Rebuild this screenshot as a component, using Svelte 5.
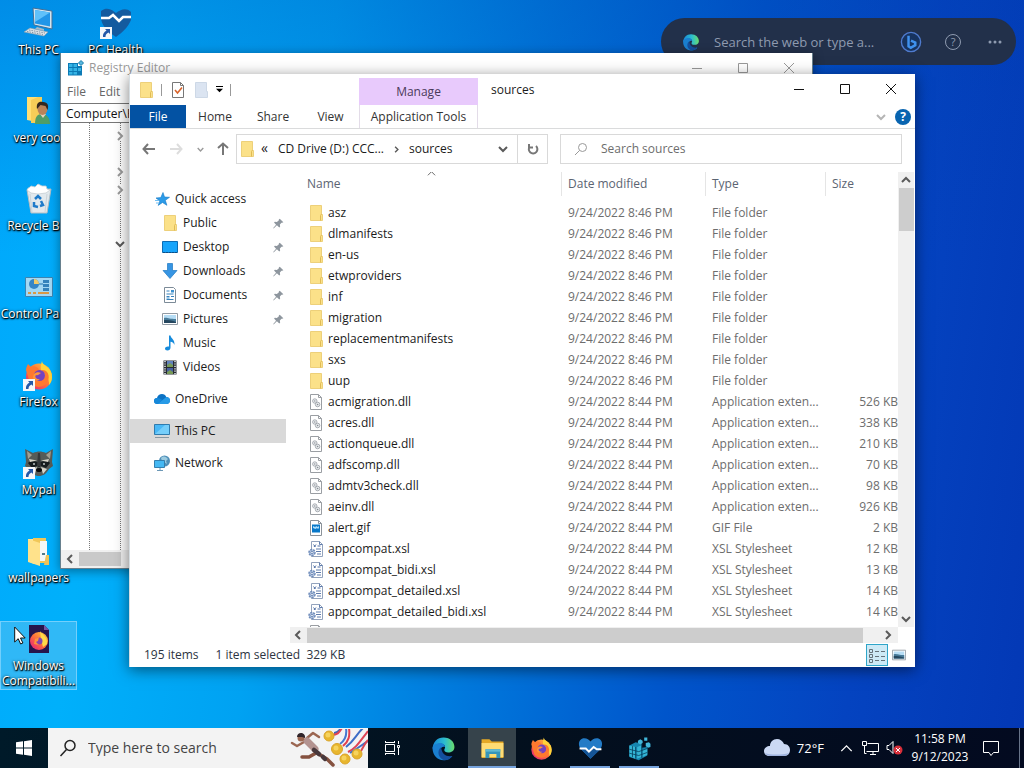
<script>
  const shortcuts = [
    { label: 'This PC', icon: 'computer' },
    { label: 'very cool', icon: 'user' },
    { label: 'Recycle Bin', icon: 'bin' },
    { label: 'Control Panel', icon: 'control' },
    { label: 'Firefox', icon: 'firefox', link: true },
    { label: 'Mypal', icon: 'mypal', link: true },
    { label: 'wallpapers', icon: 'wallpapers' },
    { label: 'Windows Compatibili...', icon: 'compat', selected: true },
    { label: 'PC Health', icon: 'health', link: true }
  ];

  const places = [
    { label: 'Quick access', icon: 'star' },
    { label: 'Public', icon: 'folder', child: true, pinned: true },
    { label: 'Desktop', icon: 'desktop', child: true, pinned: true },
    { label: 'Downloads', icon: 'download', child: true, pinned: true },
    { label: 'Documents', icon: 'document', child: true, pinned: true },
    { label: 'Pictures', icon: 'picture', child: true, pinned: true },
    { label: 'Music', icon: 'music', child: true },
    { label: 'Videos', icon: 'video', child: true },
    { label: 'OneDrive', icon: 'cloud', top: true },
    { label: 'This PC', icon: 'monitor', top: true, selected: true },
    { label: 'Network', icon: 'network', top: true }
  ];

  const folders = ['asz', 'dlmanifests', 'en-us', 'etwproviders', 'inf', 'migration', 'replacementmanifests', 'sxs', 'uup'];

  const files = [
    ...folders.map((name) => ({ name, icon: 'folder', date: '9/24/2022 8:46 PM', type: 'File folder', size: '' })),
    ...[
      ['acmigration.dll', 'dll', 'Application exten...', '526 KB'],
      ['acres.dll', 'dll', 'Application exten...', '338 KB'],
      ['actionqueue.dll', 'dll', 'Application exten...', '210 KB'],
      ['adfscomp.dll', 'dll', 'Application exten...', '70 KB'],
      ['admtv3check.dll', 'dll', 'Application exten...', '98 KB'],
      ['aeinv.dll', 'dll', 'Application exten...', '926 KB'],
      ['alert.gif', 'gif', 'GIF File', '2 KB'],
      ['appcompat.xsl', 'xsl', 'XSL Stylesheet', '12 KB'],
      ['appcompat_bidi.xsl', 'xsl', 'XSL Stylesheet', '13 KB'],
      ['appcompat_detailed.xsl', 'xsl', 'XSL Stylesheet', '14 KB'],
      ['appcompat_detailed_bidi.xsl', 'xsl', 'XSL Stylesheet', '14 KB']
    ].map(([name, icon, type, size]) => ({ name, icon, type, size, date: '9/24/2022 8:44 PM' })),
    { name: '', icon: 'dll', date: '', type: '', size: '' }
  ];

  const apps = [
    { label: 'Microsoft Edge', icon: 'edge' },
    { label: 'File Explorer', icon: 'explorer', active: true },
    { label: 'Firefox', icon: 'firefox' },
    { label: 'PC Health Check', icon: 'heart', open: true },
    { label: 'Registry Editor', icon: 'regcube', open: true }
  ];

  // drawn on a 32px grid, everything else uses 16px
  const large = ['computer', 'user', 'bin', 'control', 'firefox', 'mypal', 'wallpapers', 'compat', 'health', 'edge', 'explorer', 'heart', 'regcube'];
</script>

{#snippet icon(name, size = 16)}
  <svg class="icon" width={size} height={size} viewBox={large.includes(name) ? '0 0 32 32' : '0 0 16 16'} aria-hidden="true">
    {#if name === 'folder'}
      <path d="M2.500 0.500h11v9h1v6h-12z" fill="#fbe189" stroke="#edd07a" />
      <path d="M12.500 15.500v-5l1-1.500" fill="none" stroke="#e0bb55" />
    {:else if name === 'ghostfolder'}
      <path d="M2.500 0.500h11v9h1v6h-12z" fill="#dbe4f1" stroke="#cdd8e6" />
    {:else if name === 'check'}
      <path d="M2.500 0.500h8l3 3v12h-11z" fill="#fff" stroke="#777" />
      <path d="M10.500 0.500v3h3" fill="none" stroke="#777" />
      <path d="M5 8l2.500 3L12 5.500" fill="none" stroke="#d9642b" stroke-width="1.600" />
    {:else if name === 'dll'}
      <path d="M2.500 0.500h8l3 3v12h-11z" fill="#fff" stroke="#9a9ea3" />
      <path d="M10.500 0.500v3h3" fill="none" stroke="#9a9ea3" />
      <circle cx="6.800" cy="7" r="2.200" fill="#eceef0" stroke="#989da4" stroke-width=".8" />
      <circle cx="6.800" cy="7" r=".7" fill="#858b93" />
      <circle cx="9.600" cy="10.500" r="2.300" fill="#e6e9eb" stroke="#989da4" stroke-width=".8" />
      <circle cx="9.600" cy="10.500" r=".8" fill="#858b93" />
    {:else if name === 'gif'}
      <path d="M2.500 0.500h8l3 3v12h-11z" fill="#fff" stroke="#8b9299" />
      <path d="M10.500 0.500v3h3" fill="none" stroke="#8b9299" />
      <path d="M4 4.500h8v8H4z" fill="#0878c9" />
      <path d="M5 6l2 1 1.500-1 1 1L11 6v2l-1 1-1-1-1.500 1L5 8z" fill="#a9dcfb" />
    {:else if name === 'xsl'}
      <path d="M3.500 0.500h8l3 3v12h-11z" fill="#fff" stroke="#93a3bd" />
      <path d="M11.500 0.500v3h3M8 8h5M8 10.500h5M9 13h4" fill="none" stroke="#5f7cad" />
      <path d="M5.500 3.500l2 2.500M8 3.500L6 6M9.500 5h3" stroke="#4f6fa5" fill="none" />
      <circle cx="4" cy="11.500" r="3" fill="#b9c9e3" stroke="#6f8cba" stroke-width="1.500" stroke-dasharray="2 1" />
      <circle cx="4" cy="11.500" r="1.200" fill="#fff" stroke="#6f8cba" />
    {:else if name === 'star'}
      <path d="M9 1.500l1.500 4.500 5 .3-4.200 3 1.600 5L8.500 11.500l-4.300 2.900 1.700-4.400L2 7l4.800-.4z" fill="#2b9be8" stroke="#1479c6" stroke-width=".6" />
      <path d="M1 9.500h4M2 12h3" stroke="#72bff2" />
    {:else if name === 'desktop'}
      <path d="M.5 2.500h15v11H.5z" fill="#18a5fb" stroke="#0d6db5" />
      <path d="M1 13.500h14" stroke="#0b4f86" stroke-dasharray="2 1" />
    {:else if name === 'download'}
      <path d="M5.500 0.500h5v7h4.500L8 15.500 1 7.500h4.500z" fill="#3795e3" stroke="#1e78c2" stroke-width=".7" />
    {:else if name === 'document'}
      <path d="M2.500 0.500h9l2 2v13h-11z" fill="#fff" stroke="#7c8b98" />
      <path d="M4.500 4h3M4.500 7h7M4.500 9.500h3M9 9.500h3M4.500 12.500h7" stroke="#3682bc" />
      <path d="M9 3h3v2.500H9zM4.500 10.500h3v1h-3z" fill="#3d91cf" />
    {:else if name === 'picture'}
      <path d="M.5 2.500h15v11H.5z" fill="#fff" stroke="#929ba4" />
      <path d="M2 4h12v8H2z" fill="#b6ddf5" />
      <path d="M2 7c3-1 5 1 12 1v4H2z" fill="#477a98" />
      <path d="M2 9c4 0 7 0 12 2v1H2z" fill="#25475f" />
    {:else if name === 'music'}
      <path d="M7 0.500h1.500c.3 3 4.500 4 4 9.500-.6-2-2-3-4-3.200v5.700c0 2-1.300 3-3 3s-2.500-.8-2.500-2 1.500-2.500 4-2z" fill="#168bdc" />
    {:else if name === 'video'}
      <path d="M1.500 1.500h13v14h-13z" fill="#272b32" />
      <path d="M5 2h6v6H5z" fill="#6182be" /><path d="M5 9h6v6H5z" fill="#465fa0" />
      <path d="M5 6l3-2 3 2v2H5zM5 13l3-2 3 2v2H5z" fill="#789b57" />
      <path d="M3 2v14M13 2v14" stroke="#e5e9ef" stroke-width="1.500" stroke-dasharray="1.200 1.200" />
    {:else if name === 'cloud'}
      <path d="M3.500 13C1.300 13 0 11.700 0 10s1.300-3 3-3C3.700 4.500 5.500 3 8 3c2 0 3.600 1 4.300 3 2.200 0 3.700 1.500 3.700 3.500S14.600 13 12.500 13z" fill="#0c72c4" />
      <path d="M3.500 13l8.800-7c2.200 0 3.700 1.500 3.700 3.500S14.600 13 12.500 13z" fill="#279be7" />
      <path d="M3 7c2-.3 4 .7 5.200 2.200L3.500 13C1.300 13 0 11.700 0 10s1.300-3 3-3z" fill="#1688da" />
    {:else if name === 'monitor'}
      <path d="M.5 1.500h15v10H.5z" fill="#49b8f6" stroke="#307bad" />
      <path d="M1 11L11 2h4v9z" fill="#75cefa" />
      <path d="M1 14.500h14" stroke="#8798a3" />
    {:else if name === 'network'}
      <circle cx="10.500" cy="6" r="5.500" fill="#4f8fb8" />
      <path d="M7 3c3-3 5-1 7 1l-2 2 1 3-3-2-2-1z" fill="#9ccbe0" />
      <path d="M.5 5.500h10v7H.5z" fill="#45b8f3" stroke="#347fae" />
      <path d="M3 15.500h6M6 13v2" stroke="#6c98b6" />
    {:else if name === 'pin'}
      <path d="M9.500 2L14 6.500l-1.500.7-.8-.2-2 2.300.3 2.700-1 1-3-3L2 14l-.5-.5L5 9.500l-2.500-2.600 1-1 2.500.2L8.500 4l-.1-1z" fill="#8e969e" />
    {:else if name === 'registry'}
      <path d="M0 3h10v3h4v9.500H0z" fill="#0c7ab5" />
      <path d="M1 4h3.500v3H1zM5.500 4H9v3H5.500zM1 8h3.500v3H1zM5.500 8H9v3H5.500zM10 8h3v3h-3zM1 12h3.500v2.500H1zM5.500 12H9v2.500H5.500z" fill="#35b4e6" />
      <path d="M13 0.500l2.500 2.500L13 5.500 10.500 3z" fill="#55b6e0" stroke="#187ca8" />
    {:else if name === 'bing'}
      <circle cx="8" cy="8" r="7" fill="#17335f" stroke="#4f7bcf" />
      <path d="M6.200 3.500v7.700l1.600 1 3.300-1.900V8.400L8 7" fill="none" stroke="#3f91ee" stroke-width="1.800" />
    {:else if name === 'computer'}
      <path d="M10 1l19 3v18l-18-4z" fill="#d3e4ef" stroke="#426f97" />
      <path d="M12 3l15 2.500v14L12 16.500z" fill="#2196e8" /><path d="M12 3l15 2.500L12 15z" fill="#5fc1fa" />
      <path d="M14 20l7 2v2l-9-2z" fill="#a8bac8" />
      <path d="M7 21l18 4-4 4-20-4z" fill="#dce3e8" stroke="#899ca9" stroke-width=".6" />
      <path d="M6 23l16 3M4 24.500l16 3" stroke="#8697a6" stroke-dasharray="1.500 1" />
    {:else if name === 'user'}
      <path d="M4 2h15v26l-15-3z" fill="#ffdf75" /><path d="M8 5l7-3h4v26H8z" fill="#f6cd58" />
      <path d="M12 29c0-8 3-10 7-10s8 3 8 10z" fill="#4f9d67" /><path d="M17 19l3 4 3-4z" fill="#e6d4bc" />
      <ellipse cx="19.500" cy="14" rx="5" ry="6" fill="#b98359" />
      <path d="M14 14c-1-6 2-8 6-7 5 0 6 4 4.500 8l-2-4-5-1z" fill="#33271f" />
    {:else if name === 'bin'}
      <path d="M4 7l24-1-4 24H8z" fill="#e2e9ed" stroke="#b3bdc3" />
      <path d="M4 7c1-3 3-2 4-4l4 1 3-3 4 2 4 0 1 3 3 1-4 3-8 1-7-1z" fill="#fff" stroke="#c6ced3" stroke-width=".8" />
      <path d="M12 16l3-3 3 3M18 18l2 4-3 1M15 24l-4-1v-4" fill="none" stroke="#207bc9" stroke-width="2.500" />
      <path d="M24 11l-2 18M7 11l2 18" stroke="#cbd3d8" />
    {:else if name === 'control'}
      <path d="M2.500 6.500h27v19h-27z" fill="#a3d8f4" stroke="#3c84b1" />
      <circle cx="11" cy="13" r="5" fill="#3685c5" /><path d="M11 13V8a5 5 0 0 1 5 5z" fill="#f2ca67" />
      <path d="M20 9h6v3h-6zM20 13h6v3h-6zM20 17h6v3h-6z" fill="#3483bc" />
      <path d="M5 22h3M10 22h3M15 22h11" stroke="#d99845" stroke-width="2" /><path d="M16 13h4" stroke="#2575ad" />
    {:else if name === 'firefox'}
      <circle cx="16" cy="17.500" r="13" fill="url(#fox)" />
      <path d="M19 2c0 5 10 6 10 16 0 3-1 6-3 8 1-8-5-9-7-12-2-4-1-9 0-12z" fill="#ffd43b" />
      <path d="M3 11c0-2 1-4 2-6l3 3c2-1 4-1 5 0 3 1 4 4 2 6-4 0-4 4-1 6s8 0 8-3-2-5-4-6c7-1 9 6 7 11-4 8-14 7-18 2z" fill="#ff792f" />
      <circle cx="16.500" cy="16.500" r="5.500" fill="#7542bf" />
      <path d="M11 15c2-2 5-2 7-1-2 1-3 3-5 2-2 2 1 5 4 4-3 3-7 1-7-2z" fill="#ff9838" />
    {:else if name === 'mypal'}
      <path d="M2 2l8 4c5-2 8-2 13 0l7-4-1 13 1 4-4 3c-3 5-6 7-10 7S8 27 6 22l-4-3 1-4z" fill="#565c58" />
      <path d="M4 4l5 4-4 4zM28 4l-5 4 4 4z" fill="#a4a091" />
      <path d="M5 16c4-4 8-1 11-1s8-3 11 1l-4 5-5-2-2 1-2-1-5 2z" fill="#161d1e" />
      <path d="M6 12l8 1.500L7 15zM26 12l-8 1.500 7 1.500zM8 22l6-2-2 7zM24 22l-6-2 2 7z" fill="#d7d5c9" />
      <circle cx="11" cy="17" r="1" fill="#bec6c5" /><circle cx="21" cy="17" r="1" fill="#bec6c5" />
      <path d="M15 6h2l1 13h-4z" fill="#35393a" /><ellipse cx="16" cy="23" rx="3" ry="2" fill="#080a0b" />
    {:else if name === 'wallpapers'}
      <path d="M5 4h6v25l-6-3z" fill="#ffe69a" /><path d="M10 3h13v25H10z" fill="#f1c758" />
      <path d="M17 6h7v20h-7z" fill="#f5f7f7" /><path d="M19 18h3v2h-3z" fill="#537b8b" />
      <path d="M5 4l12 4v23L5 27z" fill="#ffe28b" /><path d="M23 20h3v10h-5z" fill="#eec35b" />
    {:else if name === 'compat'}
      <path d="M6 2h15l5 5v23H6z" fill="#26154c" /><path d="M21 2v5h5z" fill="#7355a3" />
      <circle cx="16" cy="18" r="9" fill="url(#fox)" /><path d="M17 8c1 3 8 5 7 13l-4 3-2-8z" fill="#ffda48" />
      <circle cx="16" cy="18" r="3.500" fill="#8445af" /><path d="M12 16l4-2-1 4-2 1 3 3-5-1z" fill="#ff923b" />
    {:else if name === 'health'}
      <path d="M1 4c7-5 12 0 15 2 4-3 10-6 15-1v8c-3 7-8 12-15 17C7 24 1 18 1 10z" fill="#145b9f" />
      <path d="M1 11h8l4-3 6 6 4-4h8" fill="none" stroke="#fff" stroke-width="2.500" />
    {:else if name === 'edge'}
      <path d="M2 17C2 8 8 2 16 2c9 0 14 6 14 12 0 5-4 7-8 7-3 0-5-1-5-3 0-1 1-2 1-4 0-2-2-4-5-4-5 0-10 4-11 7z" fill="url(#edge)" />
      <path d="M2 16c0-4 5-7 10-7 4 0 6 3 6 5-3-1-6 1-6 5 0 5 5 8 9 8 3 0 5-1 6-1-2 3-6 5-11 5C8 31 2 24 2 16z" fill="#1a7fd0" />
      <path d="M13 14.500c-6 4-4 14 4 16.500 5 0 8-2 10.500-5.500-7 2-14-2-14.500-11z" fill="#144f9e" />
    {:else if name === 'explorer'}
      <path d="M2 4h10l3 3h15v21H2z" fill="#e5a926" /><path d="M2 9h28v18H2z" fill="#ffdc73" />
      <path d="M7 17h19v11h-5v-5h-9v5H7z" fill="#3695ba" /><path d="M7 17h19v3H7z" fill="#63bad2" />
    {:else if name === 'heart'}
      <path d="M16 29L3 16C-1 10 2 3 8 3c4 0 6 2 8 4 2-2 4-4 8-4 6 0 9 7 5 13z" fill="#237bc6" />
      <path d="M16 29L3 16h8l3 4 6-6 3 3h6z" fill="#155597" />
      <path d="M2 16h8l4 4 6-6 4 3h6" fill="none" stroke="#fff" stroke-width="2.500" />
    {:else if name === 'regcube'}
      <path d="M3 12l8-4 8 2v5l7-1v11l-11 6-12-4z" fill="#1685ae" />
      <path d="M3 12l8 2v15l-8-3zM13 14l5-2v15l-5 2zM20 18l6-2v8l-6 3z" fill="#34b4d4" />
      <path d="M7 13v14M3 17l12 3 11-4M3 22l12 3 11-4M11 14v15M19 10v18" stroke="#073d5b" fill="none" />
      <path d="M14 6l3-2 3 2v3l-3 2-3-2zM24 9l4-1 2 2v4l-3 1-3-2zM22 2h4v4h-4z" fill="#42b7da" />
    {/if}
  </svg>
{/snippet}

{#snippet chevron(dir, size = 10)}
  <svg class="chevron {dir}" width={size} height={size} viewBox="0 0 10 10" aria-hidden="true"><path d="M1 3l4 4 4-4" /></svg>
{/snippet}

{#snippet windowButtons()}
  <div class="window-buttons">
    <button aria-label="Minimize"><svg width="10" height="10"><path d="M0 5.500h10" /></svg></button>
    <button aria-label="Maximize"><svg width="10" height="10"><path d="M.5 .5h9v9h-9z" /></svg></button>
    <button aria-label="Close"><svg width="10" height="10"><path d="M0 0l10 10M10 0L0 10" /></svg></button>
  </div>
{/snippet}

<svg class="defs" width="0" height="0" aria-hidden="true">
  <defs>
    <linearGradient id="fox" x1="1" y1="0" x2="0" y2="1"><stop offset="0" stop-color="#ffd83d" /><stop offset=".5" stop-color="#ff7139" /><stop offset="1" stop-color="#e31587" /></linearGradient>
    <linearGradient id="edge"><stop offset="0" stop-color="#1686d9" /><stop offset=".55" stop-color="#2cbdcf" /><stop offset="1" stop-color="#69dd6c" /></linearGradient>
  </defs>
</svg>

<div class="screen">
  <main class="desktop">
    <nav class="shortcuts" aria-label="Desktop">
      {#each shortcuts as item}
        <button class="shortcut" class:selected={item.selected}>
          <span class="shortcut-icon">
            {@render icon(item.icon, 32)}
            {#if item.link}
              <svg class="arrow" width="12" height="12" viewBox="0 0 12 12"><path d="M0 0h12v12H0z" fill="#f5f7fa" /><path d="M5 2h5v5L8.500 5.500C6 7 5.500 8 5.500 10H3C2.500 7 4 5 6.500 3.500z" fill="#2458a8" /></svg>
            {/if}
          </span>
          <span>{item.label}</span>
        </button>
      {/each}
    </nav>

    <form class="edge-bar">
      {@render icon('edge', 18)}
      <input aria-label="Search the web" placeholder="Search the web or type a..." />
      <button type="button" aria-label="Bing chat">{@render icon('bing', 22)}</button>
      <button type="button" aria-label="Help"><span class="ring">?</span></button>
      <button type="button" aria-label="More"><svg class="dots" width="16" height="4"><circle cx="3" cy="2" r="1.500" /><circle cx="8" cy="2" r="1.500" /><circle cx="13" cy="2" r="1.500" /></svg></button>
    </form>

    <section class="window registry">
      <header class="reg-title">{@render icon('registry')}<span>Registry Editor</span>{@render windowButtons()}</header>
      <div class="reg-menu"><button>File</button><button>Edit</button></div>
      <input class="reg-path" aria-label="Key path" value="Computer\HKEY_LOCAL_MACHINE" />
      <div class="reg-tree">
        <div class="reg-line"></div>
        <div class="reg-nodes">
          {@render chevron('right')}
          {@render chevron('right')}
          {@render chevron('right')}
          {@render chevron('down')}
        </div>
      </div>
      <div class="reg-scroll">{@render chevron('left')}<span></span></div>
    </section>

    <section class="window explorer">
      <header class="title">
        <div class="quick">
          {@render icon('folder')}<i></i>{@render icon('check')}{@render icon('ghostfolder')}
          <svg width="7" height="7" viewBox="0 0 8 8"><path d="M0 0h8v1H0zM0 3h8L4 7z" /></svg><i></i>
        </div>
        <span class="manage">Manage</span>
        <span class="caption">sources</span>
        {@render windowButtons()}
      </header>

      <div class="ribbon">
        <button class="file">File</button>
        <button class="home">Home</button>
        <button class="share">Share</button>
        <button class="view">View</button>
        <button class="tools">Application Tools</button>
        <span class="ribbon-end">{@render chevron('down light')}<button class="help" aria-label="Help">?</button></span>
      </div>

      <div class="toolbar">
        <div class="history">
          <button aria-label="Back"><svg width="14" height="12" viewBox="0 0 14 12"><path d="M6 1L1.500 6 6 11M1.500 6H13" /></svg></button>
          <button class="off" aria-label="Forward"><svg width="14" height="12" viewBox="0 0 14 12"><path d="M8 1l4.500 5L8 11M12.500 6H1" /></svg></button>
          <button class="recent" aria-label="Recent">{@render chevron('down', 7)}</button>
          <button aria-label="Up"><svg width="12" height="14" viewBox="0 0 12 14"><path d="M1 6l5-4.500L11 6M6 1.500V13" /></svg></button>
        </div>
        <div class="address">
          {@render icon('folder')}
          <span class="back">«</span>
          <button>CD Drive (D:) CCC...</button>
          {@render chevron('right', 7)}
          <button>sources</button>
          <button class="drop" aria-label="Previous locations">{@render chevron('down')}</button>
          <button class="refresh" aria-label="Refresh"><svg width="12" height="12" viewBox="0 0 12 12"><path d="M3 3.200a4.300 4.300 0 1 0 6-.2M2 1v3.500h4" /></svg></button>
        </div>
        <label class="search">
          <svg width="14" height="14" viewBox="0 0 14 14"><circle cx="8.500" cy="5.500" r="4" /><path d="M5.500 8.500L1 13" /></svg>
          <input placeholder="Search sources" aria-label="Search sources" />
        </label>
      </div>

      <div class="body">
        <nav class="places" aria-label="Places">
          {#each places as place}
            <a href="#{place.icon}" class:child={place.child} class:top={place.top} class:selected={place.selected}>
              {@render icon(place.icon)}<span>{place.label}</span>
              {#if place.pinned}<em>{@render icon('pin', 13)}</em>{/if}
            </a>
          {/each}
        </nav>

        <div class="content">
          <div class="list">
            <table>
              <thead>
                <tr><th class="c-name"><span>Name {@render chevron('up', 9)}</span></th><th class="c-date"><span>Date modified</span></th><th class="c-type"><span>Type</span></th><th class="c-size"><span>Size</span></th></tr>
              </thead>
              <tbody>
                {#each files as file}
                  <tr>
                    <td><span class="file-name">{@render icon(file.icon)}{file.name}</span></td>
                    <td>{file.date}</td>
                    <td>{file.type}</td>
                    <td class="size">{file.size}</td>
                  </tr>
                {/each}
              </tbody>
            </table>
          </div>
          <div class="v-scroll">{@render chevron('up')}<span></span>{@render chevron('down')}</div>
          <div class="h-scroll">{@render chevron('left')}<span></span>{@render chevron('right')}</div>
        </div>
      </div>

      <footer class="status">
        <span>195 items</span><span>1 item selected&nbsp; 329 KB</span>
        <div class="views">
          <button class="on" aria-label="Details"><svg width="18" height="15"><path d="M1.500 1.500h3v3h-3zM1.500 6.500h3v3h-3zM1.500 11.500h3v3h-3zM7 3.500h4M13 3.500h4M7 8.500h4M13 8.500h4M7 12.500h4M13 12.500h4" /></svg></button>
          <button aria-label="Large icons">{@render icon('picture', 14)}</button>
        </div>
      </footer>
    </section>

    <svg class="cursor" width="12" height="19" viewBox="0 0 12 19"><path d="M.7 1v15l3.500-3.300L6.600 18l2.300-1-2.400-5h4.700z" fill="#fff" stroke="#111" /></svg>
  </main>

  <footer class="taskbar">
    <button class="start" aria-label="Start"><svg width="16" height="16" viewBox="0 0 16 16"><path d="M0 2.300L7 1.300v6.200H0zM8 1.200L16 0v7.500H8zM0 8.500h7v6.200l-7-1zM8 8.500h8V16l-8-1.200z" fill="#fff" /></svg></button>
    <label class="task-search">
      <svg width="18" height="18" viewBox="0 0 18 18"><circle cx="11" cy="6.500" r="5" /><path d="M7.500 10.500L1.500 17" /></svg>
      <input placeholder="Type here to search" aria-label="Type here to search" />
      <svg class="games" width="78" height="39" viewBox="0 0 78 39">
        <g stroke-width="2" fill="none">
          <path d="M44 4c4 0 5-2 7-5" stroke="#3f65b5" /><path d="M42 6c5 0 7-2 10-7" stroke="#e24352" />
          <path d="M53 17c6-5 7-10 6-18" stroke="#e33f4c" /><path d="M50 15c6-4 7-9 6-16" stroke="#4677cf" /><path d="M56 18c9-7 9-11 17-19" stroke="#3c6dc6" />
          <path d="M58 23c8-4 10-8 20-21" stroke="#df4354" /><path d="M60 24c8-5 12-8 18-12" stroke="#3d6fc6" /><path d="M71 22c3-5 4-8 7-11" stroke="#db4654" />
        </g>
        <g fill="#e8b62e" stroke="#d9a42a"><circle cx="39" cy="7" r="5" /><circle cx="47" cy="20" r="5.500" /><circle cx="55" cy="30" r="5" /><circle cx="67" cy="25" r="5" /></g>
        <g fill="#f6d35e"><circle cx="38" cy="6" r="2.500" /><circle cx="46" cy="19" r="2.500" /><circle cx="54" cy="29" r="2.500" /><circle cx="66" cy="24" r="2.500" /></g>
        <g fill="none" stroke-linejoin="round" stroke-linecap="round">
          <path d="M14 13L7 17l-5-3M17 9l6-5 6 4" stroke="#9b6651" stroke-width="2.500" />
          <path d="M26 24l-7 4h-7M27 24l10 6 6 6" stroke="#85513f" stroke-width="3.500" />
          <path d="M17 12l8 8" stroke="#b39390" stroke-width="7" />
          <path d="M24 21l5 4M33 28l2 2" stroke="#47383c" stroke-width="4.500" />
        </g>
        <circle cx="11" cy="9" r="3.500" fill="#9c6852" /><path d="M7 8c0-6 9-5 8 1l-3-1z" fill="#302429" />
      </svg>
    </label>
    <button class="task overview" aria-label="Task view"><svg class="line" width="18" height="16" viewBox="0 0 18 16"><path d="M2.500 4.500h9v7h-9zM2.500 1v2M2.500 2.500h9M11.500 1v2M2.500 15v-2M2.500 13.500h9M11.500 15v-2M15.500 1v3M15.500 8v7M14.500 5.500h2v2h-2z" /></svg></button>
    {#each apps as app}
      <button class="task" class:active={app.active} class:open={app.open} aria-label={app.label}>{@render icon(app.icon, 25)}</button>
    {/each}
    <div class="tray">
      <button class="weather"><svg width="26" height="18" viewBox="0 0 26 18"><path d="M6 17c-4 0-6-2-6-5s3-5 6-5c0-4 3-7 7-7 3 0 6 2 7 5 4 0 6 3 6 6s-2 6-6 6z" fill="#cbd9f4" /><path d="M1 14c5 2 17 2 24 0-1 2-3 3-5 3H6c-2 0-4-1-5-3z" fill="#9fb3de" /></svg>72°F</button>
      <button class="more" aria-label="Hidden icons">{@render chevron('up', 13)}</button>
      <button class="net" aria-label="Network"><svg class="line" width="18" height="15" viewBox="0 0 18 15"><path d="M5.500 2.500h11v8H4.500M8 13.500h6M11 10.500v3M.5 .5h4v4h-4zM2.500 4.500v8h2" /></svg></button>
      <button class="sound" aria-label="Volume"><svg class="line" width="18" height="16" viewBox="0 0 18 16"><path d="M1 5.500h2l4-4v12l-4-4H1z" /><circle cx="12" cy="10" r="4.500" fill="#d92f3a" stroke="none" /><path d="M10 8l4 4M14 8l-4 4" /></svg></button>
      <button class="clock"><span>11:58 PM</span><span>9/12/2023</span></button>
      <button class="notes" aria-label="Notifications"><svg class="line" width="18" height="17" viewBox="0 0 18 17"><path d="M1.500 1.500h15v11h-5L9 15.500l-2-3H1.500z" /></svg></button>
      <button class="peek" aria-label="Show desktop"></button>
    </div>
  </footer>
</div>

<style>
  :global(body) {
    margin: 0;
    overflow: hidden;
  }
  .screen {
    display: flex;
    flex-direction: column;
    height: 100vh;
    font: 12px/16px "Open Sans", "Noto Sans", sans-serif;
    color: #1b1b1b;
  }
  .screen * {
    box-sizing: border-box;
  }
  button, input {
    font: inherit;
    color: inherit;
    background: none;
    border: 0;
    padding: 0;
    margin: 0;
    min-width: 0;
    outline: 0;
    border-radius: 0;
    white-space: nowrap;
  }
  a {
    color: inherit;
    text-decoration: none;
  }
  svg {
    display: block;
    flex: none;
  }
  .defs {
    position: absolute;
  }
  .chevron path {
    fill: none;
    stroke: #5a5a5a;
    stroke-width: 2;
  }
  .chevron.right { transform: rotate(-90deg); }
  .chevron.left { transform: rotate(90deg); }
  .chevron.up { transform: rotate(180deg); }
  .chevron.light path { stroke: #b5b5b5; }

  .desktop {
    position: relative;
    flex: 1;
    min-height: 0;
    overflow: hidden;
    background:
      linear-gradient(180deg, rgba(0, 60, 170, 0.25), rgba(0, 60, 170, 0) 35%),
      linear-gradient(98deg, #00a8fc 0%, #00b0fb 14%, #00a2f2 30%, #0078dc 50%, #0055cb 68%, #0443c0 84%, #0338b5 100%);
  }
  .shortcuts {
    display: grid;
    grid-template-rows: repeat(8, 88px);
    grid-auto-flow: column;
    grid-auto-columns: 77px;
    align-items: start;
    padding-top: 5px;
    width: max-content;
  }
  .shortcut {
    display: flex;
    flex-direction: column;
    align-items: center;
    padding: 1px 0;
    border: 1px solid transparent;
    color: #fff;
    line-height: 15px;
    text-shadow: 0 1px 2px #000, 1px 1px 1px #000, 0 0 3px rgba(0, 0, 0, 0.6);
  }
  .shortcut.selected {
    background: rgba(120, 200, 240, 0.4);
    border-color: rgba(150, 220, 255, 0.65);
    white-space: normal;
  }
  .shortcut-icon {
    position: relative;
    padding-bottom: 3px;
  }
  .arrow {
    position: absolute;
    left: 0;
    bottom: 3px;
  }

  .edge-bar {
    position: absolute;
    top: 18px;
    right: 8px;
    width: 355px;
    height: 47px;
    display: flex;
    align-items: center;
    gap: 14px;
    padding: 0 7px 0 21px;
    border-radius: 24px;
    background: #22304a;
    color: #8f9bb0;
    font-size: 13px;
  }
  .edge-bar input {
    flex: 1;
  }
  .edge-bar input::placeholder,
  .search input::placeholder,
  .task-search input::placeholder {
    color: inherit;
    opacity: 1;
  }
  .edge-bar button {
    width: 28px;
    display: grid;
    place-items: center;
  }
  .dots { fill: #8f9bb0; }
  .ring {
    width: 16px;
    height: 16px;
    border: 1px solid #8f9bb0;
    border-radius: 50%;
    font-size: 11px;
    line-height: 14px;
  }

  .window {
    position: absolute;
    display: flex;
    flex-direction: column;
    background: #fff;
  }
  .window-buttons {
    display: flex;
    margin-left: auto;
  }
  .window-buttons button {
    width: 46px;
    height: 30px;
    display: grid;
    place-items: center;
  }
  .window-buttons path {
    fill: none;
    stroke: #111;
  }

  .registry {
    left: 60px;
    top: 53px;
    width: 753px;
    height: 516px;
    border: 1px solid #67808e;
    border-top: 0;
    color: #666;
    box-shadow: 0 2px 10px rgba(0, 0, 0, 0.4);
  }
  .reg-title {
    display: flex;
    align-items: center;
    gap: 5px;
    height: 29px;
    padding-left: 7px;
    color: #999;
  }
  .reg-title .window-buttons path { stroke: #999; }
  .reg-menu {
    display: flex;
    gap: 13px;
    padding: 2px 6px 3px;
    height: 21px;
  }
  .reg-path {
    height: 20px;
    padding: 0 5px;
    border: 1px solid #777;
    border-width: 1px 0;
    color: #111;
  }
  .reg-tree {
    flex: 1;
    display: flex;
    padding-left: 28px;
  }
  .reg-line {
    width: 24px;
    border-left: 1px dotted #777;
  }
  .reg-nodes {
    display: flex;
    flex-direction: column;
    align-items: center;
    gap: 8px;
    padding-top: 8px;
    flex: 0 0 14px;
    margin-right: auto;
    background: repeating-linear-gradient(#777 0 1px, #fff 1px 2px) center top / 1px 100% no-repeat;
  }
  .reg-nodes .chevron { background: #fff; }
  .reg-nodes .chevron:nth-child(2) { margin-top: 18px; }
  .reg-nodes .chevron:nth-child(4) { margin-top: 36px; }
  .reg-nodes .right path { stroke: #999; }
  .reg-scroll {
    display: flex;
    align-items: center;
    gap: 4px;
    height: 18px;
    padding-left: 4px;
    background: #f0f0f0;
  }
  .reg-scroll span {
    width: 42px;
    height: 14px;
    background: #c9c9c9;
  }

  .explorer {
    left: 129px;
    top: 74px;
    width: 786px;
    height: 593px;
    border-left: 1px solid #d5dde2;
    box-shadow: 0 3px 14px rgba(0, 0, 0, 0.5);
  }
  .title {
    display: flex;
    height: 31px;
    padding-right: 1px;
  }
  .quick {
    display: flex;
    align-items: center;
    width: 229px;
    padding-left: 8px;
    gap: 7px;
  }
  .quick i {
    width: 1px;
    height: 12px;
    margin-right: 1px;
    background: #999;
  }
  .manage {
    width: 119px;
    margin-top: 4px;
    background: #e8cafc;
    color: #4a3a5a;
    line-height: 27px;
    text-align: center;
  }
  .caption {
    padding-left: 13px;
    line-height: 32px;
  }
  .ribbon {
    display: flex;
    height: 24px;
    border-bottom: 1px solid #dadbdc;
    color: #333;
  }
  .ribbon button { text-align: center; }
  .ribbon .file {
    width: 56px;
    background: #0352a3;
    color: #fff;
  }
  .home, .share, .view { width: 58px; }
  .ribbon .view { width: 57px; }
  .ribbon .tools {
    width: 119px;
    border: 1px solid #e3dce8;
    border-width: 0 1px;
  }
  .ribbon-end {
    display: flex;
    align-items: center;
    gap: 9px;
    margin-left: auto;
    padding-right: 4px;
  }
  .ribbon .help {
    width: 16px;
    height: 16px;
    border-radius: 50%;
    background: #0864b0;
    color: #fff;
    font-weight: 700;
  }
  .toolbar {
    display: flex;
    padding: 5px 13px 6px 0;
    height: 41px;
  }
  .history {
    display: flex;
    align-items: center;
    justify-content: space-between;
    width: 106px;
    padding: 0 7px 0 12px;
  }
  .history path, .refresh path {
    fill: none;
    stroke: #777;
    stroke-width: 2;
  }
  .history .off path { stroke: #ddd; }
  .history .recent path { stroke: #999; }
  .address {
    display: flex;
    align-items: center;
    width: 312px;
    border: 1px solid #d9d9d9;
    padding-left: 2px;
  }
  .address .back {
    padding: 0 10px 2px 6px;
    font-size: 14px;
  }
  .address .chevron.right { margin: 0 9px; }
  .address .drop {
    display: grid;
    place-items: center;
    width: 28px;
    height: 28px;
    margin-left: auto;
  }
  .address .refresh {
    display: grid;
    place-items: center;
    width: 30px;
    height: 28px;
    border-left: 1px solid #d9d9d9;
  }
  .search {
    display: flex;
    align-items: center;
    flex: 1;
    gap: 13px;
    margin-left: 12px;
    padding-left: 13px;
    border: 1px solid #d9d9d9;
    color: #6d6d6d;
  }
  .search path, .search circle {
    fill: none;
    stroke: #999;
  }
  .search input { flex: 1; }
  .body {
    display: flex;
    flex: 1;
    min-height: 0;
  }
  .places {
    width: 160px;
    padding: 17px 4px 0 0;
  }
  .places a {
    display: flex;
    align-items: center;
    gap: 5px;
    height: 24px;
    padding-left: 24px;
  }
  .places .child { padding-left: 32px; }
  .places .top { margin-top: 8px; }
  .places .selected { background: #d9d9d9; }
  .places em { margin-left: auto; padding-right: 1px; }
  .content {
    flex: 1;
    display: grid;
    grid-template-columns: 1fr 16px;
    grid-template-rows: 1fr 16px;
    min-width: 0;
    padding: 2px 1px 0 0;
  }
  .list {
    overflow: hidden;
    min-height: 0;
  }
  table {
    width: 100%;
    table-layout: fixed;
    border-collapse: collapse;
    color: #6d6d6d;
  }
  th {
    height: 30px;
    padding: 0;
    font-weight: 400;
    text-align: left;
    vertical-align: top;
    color: #5b6472;
  }
  th span {
    display: block;
    position: relative;
    height: 24px;
    line-height: 24px;
    padding-left: 6px;
    border-left: 1px solid #e5e5e5;
  }
  .c-name span {
    padding-left: 17px;
    border: 0;
  }
  .c-name .chevron {
    position: absolute;
    left: 137px;
    top: -3px;
  }
  .c-name .chevron path { stroke-width: 1; }
  .c-date { width: 144px; }
  .c-type { width: 120px; }
  .c-size { width: 73px; }
  td {
    height: 21px;
    padding: 0 0 0 7px;
    white-space: nowrap;
  }
  td:first-child { padding-left: 18px; }
  td.size {
    padding: 0;
    text-align: right;
  }
  .file-name {
    display: flex;
    align-items: center;
    gap: 4px;
    color: #1b1b1b;
  }
  .v-scroll, .h-scroll {
    display: flex;
    align-items: center;
    background: #f0f0f0;
    padding: 3px 0;
  }
  .v-scroll {
    flex-direction: column;
  }
  .v-scroll span {
    width: 15px;
    height: 43px;
    margin: 3px 0 auto;
    background: #cdcdcd;
  }
  .h-scroll {
    padding: 0 5px 0 3px;
  }
  .h-scroll span {
    flex: 1;
    height: 15px;
    margin: 0 20px 0 4px;
    background: #cdcdcd;
  }
  .status {
    display: flex;
    align-items: center;
    gap: 17px;
    height: 24px;
    padding: 0 5px 0 14px;
    color: #2d3442;
  }
  .views {
    display: flex;
    margin-left: auto;
  }
  .views button {
    display: grid;
    place-items: center;
    width: 22px;
    height: 22px;
  }
  .views .on {
    background: #cdeaf6;
    border: 1px solid #2ea5c9;
  }
  .views .on path {
    fill: none;
    stroke: #65727a;
  }
  .cursor {
    position: absolute;
    left: 14px;
    top: 626px;
  }

  .taskbar {
    display: flex;
    height: 40px;
    background: linear-gradient(90deg, #001a29, #03101e 50%, #030a20);
    color: #fff;
  }
  .start, .task {
    display: grid;
    place-items: center;
    width: 48px;
  }
  .task { margin-right: 1px; }
  .overview { margin-right: 3px; }
  .task-search {
    position: relative;
    display: flex;
    align-items: center;
    gap: 11px;
    width: 320px;
    padding-left: 11px;
    background: #f3f3f3;
    color: #444;
    font-size: 14px;
  }
  .task-search input {
    flex: 1;
  }
  .task-search > svg:first-child {
    fill: none;
    stroke: #222;
    stroke-width: 1.5;
  }
  .task.active {
    background: #36434b;
    border-bottom: 2px solid #76a3dd;
    padding-top: 2px;
  }
  .task.open {
    background: linear-gradient(#76a3dd, #76a3dd) center bottom / 40px 2px no-repeat;
  }
  .line {
    fill: none;
    stroke: #fff;
  }
  .tray {
    display: flex;
    align-items: center;
    margin-left: auto;
  }
  .tray button { height: 40px; }
  .weather {
    display: flex;
    align-items: center;
    gap: 7px;
    font-size: 13px;
    padding-right: 16px;
  }
  .more { padding-right: 9px; }
  .more .chevron path {
    stroke: #fff;
    stroke-width: 1;
  }
  .net, .sound { width: 24px; }
  .clock {
    display: flex;
    flex-direction: column;
    justify-content: center;
    line-height: 18px;
    width: 60px;
    text-align: center;
  }
  .notes {
    display: grid;
    place-items: center;
    width: 42px;
    margin-right: 7px;
  }
  .peek {
    width: 5px;
    border-left: 1px solid #68748a;
  }
</style>
